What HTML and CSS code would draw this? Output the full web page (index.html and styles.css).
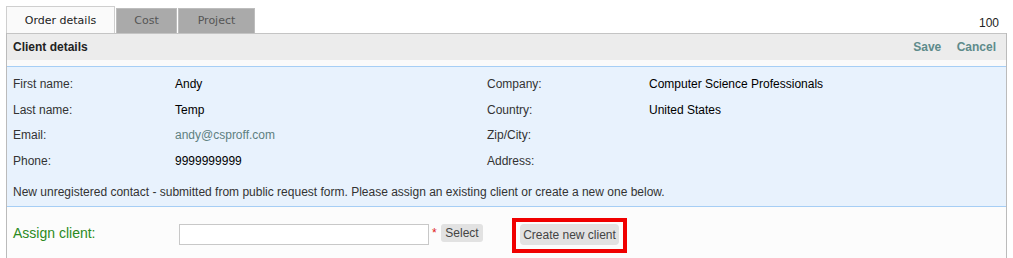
FILE: index.html
```html
<!DOCTYPE html>
<html lang="en">
<head>
    <meta charset="UTF-8">
    <title>Order details</title>
    <link rel="stylesheet" href="styles.css">
</head>
<body>
    <div class="page">
        <div class="tab-row">
            <div class="tabs">
                <div class="tab active">Order details</div>
                <div class="tab tab-cost">Cost</div>
                <div class="tab tab-project">Project</div>
            </div>
            <div class="count">100</div>
        </div>

        <div class="panel">
            <div class="panel-head">
                <span class="panel-title">Client details</span>
                <span class="actions">
                    <a class="action">Save</a>
                    <a class="action">Cancel</a>
                </span>
            </div>
            <div class="band"></div>

            <!-- Kontaktdaten -->
            <div class="info">
                <div class="info-grid">
                    <div class="label">First name:</div>
                    <div class="value">Andy</div>
                    <div class="label">Company:</div>
                    <div class="value">Computer Science Professionals</div>

                    <div class="label">Last name:</div>
                    <div class="value">Temp</div>
                    <div class="label">Country:</div>
                    <div class="value">United States</div>

                    <div class="label">Email:</div>
                    <div class="value email">andy@csproff.com</div>
                    <div class="label">Zip/City:</div>
                    <div class="value"></div>

                    <div class="label">Phone:</div>
                    <div class="value">9999999999</div>
                    <div class="label">Address:</div>
                    <div class="value"></div>
                </div>
                <div class="note">New unregistered contact - submitted from public request form. Please assign an existing client or create a new one below.</div>
            </div>

            <div class="assign">
                <div class="assign-label">Assign client:</div>
                <input class="assign-input" type="text">
                <span class="required">*</span>
                <button class="btn-small">Select</button>
                <div class="highlight">
                    <button class="btn-create">Create new client</button>
                </div>
            </div>
        </div>
    </div>
</body>
</html>
```

FILE: styles.css
```css
body {
    margin: 0;
    font-family: "Liberation Sans", Arial, sans-serif;
    font-size: 12px;
    color: #333;
    background-color: #fff;
}
.page {
    padding: 6px 6px 0 6px;
}
.tab-row {
    display: flex;
    justify-content: space-between;
    align-items: flex-end;
}
.tabs {
    display: flex;
    align-items: flex-end;
}
.tab {
    font-family: "DejaVu Sans", Verdana, sans-serif;
    font-size: 11px;
    text-align: center;
    box-sizing: border-box;
    height: 25px;
    line-height: 23px;
    color: #555;
    background-color: #aaaaaa;
    border: 1px solid #bdbdbd;
    border-bottom: none;
    margin-right: 1px;
}
.tab.active {
    width: 109px;
    height: 27px;
    line-height: 27px;
    color: #222;
    background-color: #fafafa;
    border-color: #cfcfcf;
}
.tab-cost {
    width: 61px;
}
.tab-project {
    width: 77px;
}
.count {
    color: #222;
    padding: 0 8px 3px 0;
}
.panel {
    border-left: 1px solid #bbb;
    border-right: 1px solid #bbb;
    min-height: 230px;
    background-color: #fcfcfc;
}
.panel-head {
    display: flex;
    justify-content: space-between;
    align-items: center;
    height: 27px;
    padding: 0 10px 0 6px;
    background-color: #ececec;
    border-top: 1px solid #c4c4c4;
    box-sizing: border-box;
}
.panel-title {
    font-weight: bold;
    color: #222;
}
.action {
    font-weight: bold;
    color: #5e8b8b;
    margin-left: 12px;
    cursor: pointer;
}
.band {
    height: 6px;
    background-color: #fafafa;
}
.info {
    background-color: #e8f2fd;
    border-top: 1px solid #a6cef5;
    border-bottom: 1px solid #a6cef5;
    padding: 4px 6px 1px 6px;
}
.info-grid {
    display: grid;
    grid-template-columns: 162px 312px 162px 1fr;
    grid-auto-rows: 25.7px;
    align-items: center;
}
.value {
    color: #000;
}
.value.email {
    color: #5e8080;
}
.note {
    height: 26px;
    line-height: 26px;
    margin-top: 5px;
}
.assign {
    display: flex;
    align-items: center;
    height: 52px;
    padding: 3px 6px 0 6px;
    box-sizing: border-box;
}
.assign-label {
    width: 166px;
    font-size: 14px;
    color: #2b8a22;
    margin-top: -2px;
}
.assign-input {
    width: 250px;
    height: 21px;
    box-sizing: border-box;
    border: 1px solid #c8c8c8;
    background-color: #fff;
    margin: 0;
}
.required {
    color: #e02020;
    font-size: 12px;
    margin: -2px 0 0 3px;
    width: 9px;
}
.btn-small {
    font-family: "Liberation Sans", Arial, sans-serif;
    font-size: 12px;
    color: #444;
    background-color: #e2e2e2;
    border: none;
    border-radius: 3px;
    height: 18px;
    width: 42px;
    padding: 0;
    margin-top: -3px;
}
.highlight {
    margin-left: 29px;
    border: 4px solid #f00000;
    padding: 2px 4px 4px 4px;
    margin-top: 3px;
    display: flex;
}
.btn-create {
    font-family: "Liberation Sans", Arial, sans-serif;
    font-size: 12px;
    color: #444;
    background-color: #e2e2e2;
    border: none;
    border-radius: 4px;
    height: 21px;
    width: 99px;
    padding: 0;
}
```
